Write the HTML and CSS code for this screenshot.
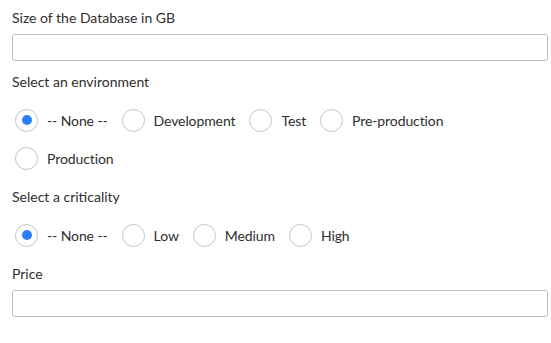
FILE: index.html
```html
<!DOCTYPE html>
<html lang="en">
<head>
  <meta charset="UTF-8">
  <title>Database request</title>
  <link rel="stylesheet" href="styles.css">
</head>
<body>

  <form class="form">
    <div class="field">
      <label class="field-label" for="dbSize">Size of the Database in GB</label>
      <input class="text-input" type="text" id="dbSize">
    </div>

    <div class="field field-radio">
      <div class="field-label">Select an environment</div>
      <div class="radio-group">
        <label class="radio"><input type="radio" name="env" checked><span class="dot"></span>-- None --</label>
        <label class="radio"><input type="radio" name="env"><span class="dot"></span>Development</label>
        <label class="radio"><input type="radio" name="env"><span class="dot"></span>Test</label>
        <label class="radio"><input type="radio" name="env"><span class="dot"></span>Pre-production</label>
        <label class="radio"><input type="radio" name="env"><span class="dot"></span>Production</label>
      </div>
    </div>

    <div class="field field-radio">
      <div class="field-label">Select a criticality</div>
      <div class="radio-group">
        <label class="radio"><input type="radio" name="crit" checked><span class="dot"></span>-- None --</label>
        <label class="radio"><input type="radio" name="crit"><span class="dot"></span>Low</label>
        <label class="radio"><input type="radio" name="crit"><span class="dot"></span>Medium</label>
        <label class="radio"><input type="radio" name="crit"><span class="dot"></span>High</label>
      </div>
    </div>

    <div class="field">
      <label class="field-label" for="price">Price</label>
      <input class="text-input" type="text" id="price">
    </div>
  </form>

</body>
</html>
```

FILE: styles.css
```css
* {
  box-sizing: border-box;
}

body {
  margin: 0;
  padding: 8px 3px 0 12px;
  background: #ffffff;
  font-family: Lato, sans-serif;
  font-size: 14px;
  color: #2e2e2e;
}

.form {
  display: flex;
  flex-direction: column;
}

.field {
  display: flex;
  flex-direction: column;
  margin-bottom: 11px;
}

.field-radio {
  margin-bottom: 10px;
}

.field-label {
  display: block;
  line-height: 20px;
  margin-bottom: 6px;
}

.text-input {
  width: 536px;
  height: 27px;
  border: 1px solid #bdbdbd;
  border-radius: 3px;
  font: inherit;
  padding: 0 8px;
}

.radio-group {
  display: flex;
  flex-wrap: wrap;
  padding: 3px 0 0 3px;
}

.radio {
  display: flex;
  align-items: center;
  height: 38px;
  margin-right: 14px;
  letter-spacing: -0.1px;
}

.radio input {
  display: none;
}

.dot {
  width: 23px;
  height: 23px;
  border: 1px solid #c4c4c4;
  border-radius: 50%;
  margin-right: 9px;
  display: flex;
  align-items: center;
  justify-content: center;
}

.radio input:checked + .dot::after {
  content: "";
  width: 10px;
  height: 10px;
  border-radius: 50%;
  background: #2d7ff9;
}
```
